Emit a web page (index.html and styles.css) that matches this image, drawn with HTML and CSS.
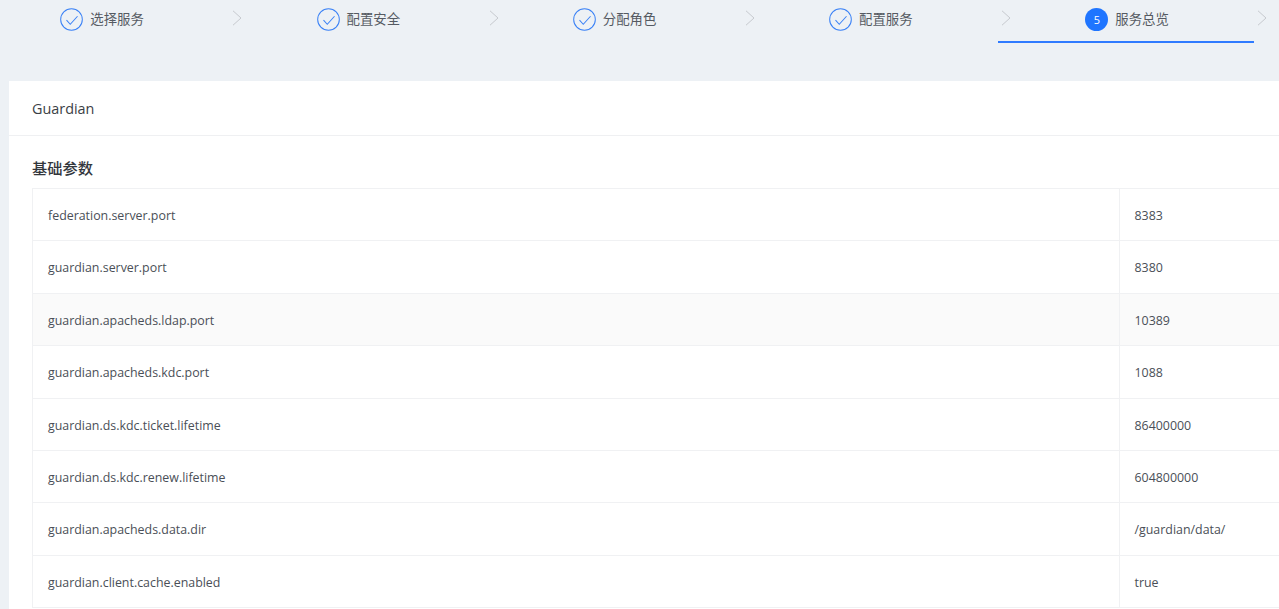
FILE: index.html
```html
<!DOCTYPE html>
<html lang="zh">
<head>
<meta charset="utf-8">
<title>服务总览</title>
<link rel="stylesheet" href="styles.css">
</head>
<body>
<nav class="steps">
  <div class="step"><span class="step-main"><svg class="step-icon" viewBox="0 0 24 24"><circle cx="12" cy="12" r="11.3"/><path d="M6.8 12.6l3.9 4.4 7.6-8.4"/></svg><span class="step-label">选择服务</span></span><svg class="chev" viewBox="0 0 10 16"><path d="M1 .8l8 7.2-8 7.2"/></svg></div>
  <div class="step"><span class="step-main"><svg class="step-icon" viewBox="0 0 24 24"><circle cx="12" cy="12" r="11.3"/><path d="M6.8 12.6l3.9 4.4 7.6-8.4"/></svg><span class="step-label">配置安全</span></span><svg class="chev" viewBox="0 0 10 16"><path d="M1 .8l8 7.2-8 7.2"/></svg></div>
  <div class="step"><span class="step-main"><svg class="step-icon" viewBox="0 0 24 24"><circle cx="12" cy="12" r="11.3"/><path d="M6.8 12.6l3.9 4.4 7.6-8.4"/></svg><span class="step-label">分配角色</span></span><svg class="chev" viewBox="0 0 10 16"><path d="M1 .8l8 7.2-8 7.2"/></svg></div>
  <div class="step"><span class="step-main"><svg class="step-icon" viewBox="0 0 24 24"><circle cx="12" cy="12" r="11.3"/><path d="M6.8 12.6l3.9 4.4 7.6-8.4"/></svg><span class="step-label">配置服务</span></span><svg class="chev" viewBox="0 0 10 16"><path d="M1 .8l8 7.2-8 7.2"/></svg></div>
  <div class="step step-active"><span class="step-main"><span class="step-num">5</span><span class="step-label">服务总览</span></span><svg class="chev" viewBox="0 0 10 16"><path d="M1 .8l8 7.2-8 7.2"/></svg></div>
</nav>
<main class="card">
  <header class="card-head">Guardian</header>
  <section class="card-body">
    <h2 class="section-title">基础参数</h2>
    <div class="params">
      <div class="row"><div class="key">federation.server.port</div><div class="val">8383</div></div>
      <div class="row"><div class="key">guardian.server.port</div><div class="val">8380</div></div>
      <div class="row row-hover"><div class="key">guardian.apacheds.ldap.port</div><div class="val">10389</div></div>
      <div class="row"><div class="key">guardian.apacheds.kdc.port</div><div class="val">1088</div></div>
      <div class="row"><div class="key">guardian.ds.kdc.ticket.lifetime</div><div class="val">86400000</div></div>
      <div class="row"><div class="key">guardian.ds.kdc.renew.lifetime</div><div class="val">604800000</div></div>
      <div class="row"><div class="key">guardian.apacheds.data.dir</div><div class="val">/guardian/data/</div></div>
      <div class="row"><div class="key">guardian.client.cache.enabled</div><div class="val">true</div></div>
    </div>
  </section>
</main>
</body>
</html>
```
FILE: styles.css
```css
* { box-sizing: border-box; }
html, body { margin: 0; height: 100%; overflow: hidden; }
body {
  background: #edf1f5;
  color: #4a4f57;
  font-family: "Open Sans", "Noto Sans CJK SC", sans-serif;
  font-size: 12.4px;
}
.steps {
  display: flex;
  height: 81px;
  margin-left: -27px;
  width: 1400px;
  align-items: flex-start;
}
.step {
  position: relative;
  flex: 0 0 256.25px;
  height: 42px;
  display: flex;
  justify-content: center;
  padding-top: 8px;
  padding-left: 2px;
}
.step-active { border-bottom: 2px solid #2f7bff; height: 43px; }
.step-main { display: flex; align-items: center; gap: 7px; height: 23px; }
.step-icon { width: 23px; height: 23px; fill: none; stroke: #3b82f6; stroke-width: 1.05; }
.step-num {
  width: 23px; height: 23px; border-radius: 50%;
  background: #1f75ff; color: #fff;
  display: flex; align-items: center; justify-content: center;
  font-size: 11px;
}
.step-label { line-height: 23px; font-size: 13.4px; color: #555a62; }
.chev {
  position: absolute;
  right: -13px;
  top: 10px;
  width: 10px;
  height: 16px;
  fill: none;
  stroke: #c6c9ce;
  stroke-width: 1;
}
.card {
  margin-left: 9px;
  width: 1400px;
  background: #fff;
  height: 600px;
}
.card-head {
  height: 55px;
  padding-left: 23px;
  line-height: 56px;
  border-bottom: 1px solid #eff0f2;
  font-size: 14.4px;
  font-weight: 500;
  color: #3a3e45;
}
.card-body { padding: 0 0 0 23px; }
.section-title {
  margin: 0;
  height: 52px;
  padding-top: 20px;
  line-height: 24px;
  font-size: 15.25px;
  font-weight: 500;
  color: #33373d;
}
.params { border-top: 1px solid #f0f1f3; border-left: 1px solid #f0f1f3; }
.row {
  display: flex;
  height: 52.375px;
  border-bottom: 1px solid #f0f1f3;
  align-items: stretch;
}
.row-hover { background: #fafafa; }
.key {
  flex: 0 0 1087px;
  padding-left: 15px;
  line-height: 53px;
  border-right: 1px solid #f0f1f3;
}
.val { padding-left: 14.5px; line-height: 53px; }
```
